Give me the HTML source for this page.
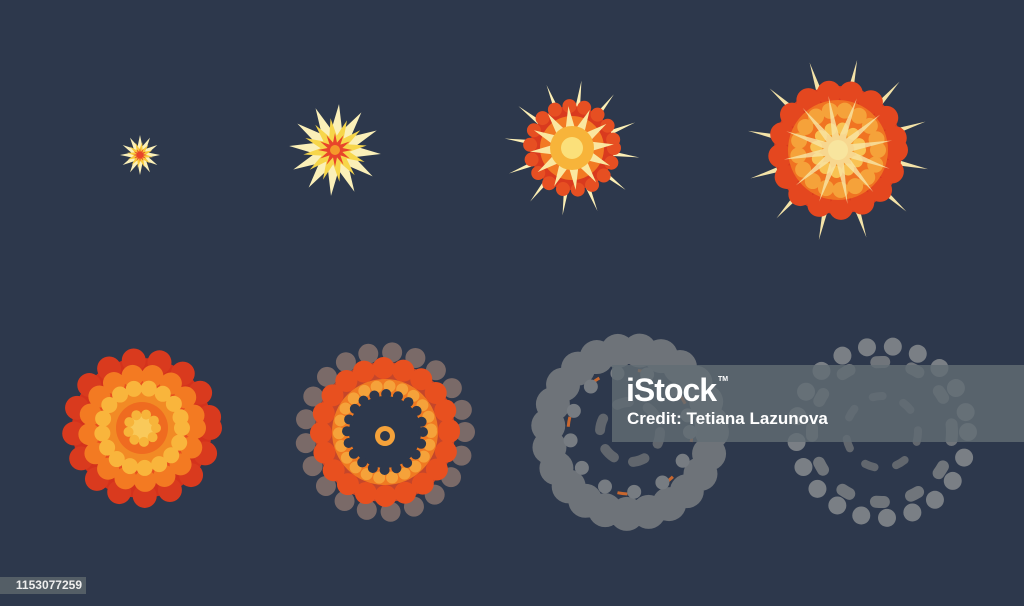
<!DOCTYPE html>
<html><head><style>
html,body{margin:0;padding:0;width:1024px;height:606px;overflow:hidden;background:#2d384c}
svg{position:absolute;left:0;top:0}
.banner{position:absolute;left:612px;top:365px;width:412px;height:77px;background:rgba(98,108,116,0.82)}
.logo{position:absolute;left:626px;top:372px;color:#fff;font:bold 32px "Liberation Sans",sans-serif;letter-spacing:-1px}
.logo sup{font-size:7px;vertical-align:top;position:relative;top:4px;margin-left:2px;letter-spacing:0}
.credit{position:absolute;left:627px;top:409px;color:#fff;font:bold 17px "Liberation Sans",sans-serif}
.id{position:absolute;left:0;top:577px;width:86px;height:17px;background:#545e66;color:#eee;font:bold 12px "Liberation Sans",sans-serif;line-height:17px;text-align:right;box-sizing:border-box;padding-right:4px}
</style></head><body>
<svg width="1024" height="606" viewBox="0 0 1024 606">
<defs>
<path id="st" d="M1,0 L.435,.117 L.866,.5 L.318,.318 L.5,.866 L.117,.435 L0,1 L-.117,.435 L-.5,.866 L-.318,.318 L-.866,.5 L-.435,.117 L-1,0 L-.435,-.117 L-.866,-.5 L-.318,-.318 L-.5,-.866 L-.117,-.435 L0,-1 L.117,-.435 L.5,-.866 L.318,-.318 L.866,-.5 L.435,-.117Z"/>
<path id="th" d="M1,0 L.242,.065 L.866,.5 L.177,.177 L.5,.866 L.065,.242 L0,1 L-.065,.242 L-.5,.866 L-.177,.177 L-.866,.5 L-.242,.065 L-1,0 L-.242,-.065 L-.866,-.5 L-.177,-.177 L-.5,-.866 L-.065,-.242 L0,-1 L.065,-.242 L.5,-.866 L.177,-.177 L.866,-.5 L.242,-.065Z"/>
</defs>
<!-- top 1 -->
<g transform="translate(140,155)">
<use href="#st" transform="scale(20)" fill="#fbf0b8"/>
<use href="#st" transform="scale(13) rotate(10)" fill="#f7c93a"/>
<use href="#st" transform="scale(7)" fill="#e8452a"/>
</g>
<!-- top 2 -->
<g transform="translate(335,150)">
<use href="#st" transform="scale(46) rotate(5)" fill="#fbf0b8"/>
<use href="#st" transform="scale(32) rotate(-8)" fill="#f7d64a"/>
<use href="#st" transform="scale(17)" fill="#e8452a"/>
<circle r="5" fill="#f59a2a"/>
</g>
<!-- top 3 -->
<g transform="translate(572,148)">
<use href="#th" transform="scale(68) rotate(8)" fill="#fcefb5"/>
<circle r="42" fill="#d93a1e"/>
<circle r="42" fill="none" stroke="#e64f22" stroke-width="14" stroke-dasharray="0 15" stroke-linecap="round"/>
<circle r="32" fill="#f27a23"/>
<use href="#st" transform="scale(42) rotate(-5)" fill="#fae7a0"/>
<circle r="22" fill="#f7b43a"/>
<circle r="11" fill="#fbe07a"/>
</g>
<!-- top 4 -->
<g transform="translate(838,150)">
<use href="#th" transform="scale(92) rotate(12)" fill="#f4e3a8"/>
<circle r="64" fill="#d93a1e"/>
<circle r="58" fill="none" stroke="#e4471f" stroke-width="24" stroke-dasharray="0 22" stroke-linecap="round"/>
<circle r="50" fill="#f07322"/>
<circle r="40" fill="none" stroke="#f5a23a" stroke-width="16" stroke-dasharray="0 15" stroke-linecap="round"/>
<circle r="22" fill="#f59b2e"/>
<circle r="22" fill="none" stroke="#f9c252" stroke-width="12" stroke-dasharray="0 12" stroke-linecap="round"/>
<circle r="10" fill="#fbe07a"/>
<use href="#th" transform="scale(55) rotate(-10)" fill="#f8e6a8" opacity="0.8"/>
</g>
<!-- bottom 1 -->
<g transform="translate(142,428)">
<circle r="70" fill="#d4321c"/>
<circle r="68" fill="none" stroke="#d93a1e" stroke-width="24" stroke-dasharray="0 26" stroke-linecap="round"/>
<circle r="56" fill="#e8501f"/>
<circle r="53" fill="none" stroke="#f37a22" stroke-width="22" stroke-dasharray="0 20" stroke-linecap="round"/>
<circle r="40" fill="#f28a25"/>
<circle r="40" fill="none" stroke="#f9b53c" stroke-width="16" stroke-dasharray="0 15" stroke-linecap="round"/>
<circle r="26" fill="#ef6b20"/>
<circle r="14" fill="#f9c95a"/>
<circle r="14" fill="none" stroke="#f7b43a" stroke-width="10" stroke-dasharray="0 10" stroke-linecap="round"/>
</g>
<!-- bottom 2 -->
<g transform="translate(385,432)">
<circle r="80" fill="none" stroke="#7a6a68" stroke-width="20" stroke-dasharray="0 24" stroke-linecap="round"/>
<circle r="70" fill="#c5462a"/>
<circle r="64" fill="none" stroke="#e8501f" stroke-width="22" stroke-dasharray="0 20" stroke-linecap="round"/>
<circle r="53" fill="#f07a22"/>
<circle r="46" fill="none" stroke="#f5a23a" stroke-width="12" stroke-dasharray="0 13" stroke-linecap="round"/>
<circle r="36" fill="#2d384c"/>
<circle r="38" fill="none" stroke="#2d384c" stroke-width="10" stroke-dasharray="0 12" stroke-linecap="round"/>
<circle r="10" cy="4" fill="#f5a23a"/>
<circle r="5" cy="4" fill="#2d384c"/>
</g>
<!-- bottom 3 -->
<g transform="translate(630,432)">
<circle r="82" fill="none" stroke="#6e7379" stroke-width="34" stroke-dasharray="0 22" stroke-linecap="round"/>
<circle r="62" fill="none" stroke="#c8672f" stroke-width="3" stroke-dasharray="10 40"/>
<circle r="60" fill="none" stroke="#777c82" stroke-width="14" stroke-dasharray="0 30" stroke-linecap="round"/>
<circle r="30" fill="none" stroke="#61666d" stroke-width="10" stroke-dasharray="12 20" stroke-linecap="round"/>
</g>
<!-- bottom 4 -->
<g transform="translate(882,432)">
<circle r="86" fill="none" stroke="#7a7f85" stroke-width="18" stroke-dasharray="0 26" stroke-linecap="round"/>
<circle r="70" fill="none" stroke="#70757b" stroke-width="12" stroke-dasharray="8 28" stroke-linecap="round"/>
<circle r="36" fill="none" stroke="#62676e" stroke-width="8" stroke-dasharray="10 22" stroke-linecap="round"/>
</g>
</svg>
<div class="banner"></div>
<div class="logo">iStock<sup>TM</sup></div>
<div class="credit">Credit: Tetiana Lazunova</div>
<div class="id">1153077259</div>
</body></html>
